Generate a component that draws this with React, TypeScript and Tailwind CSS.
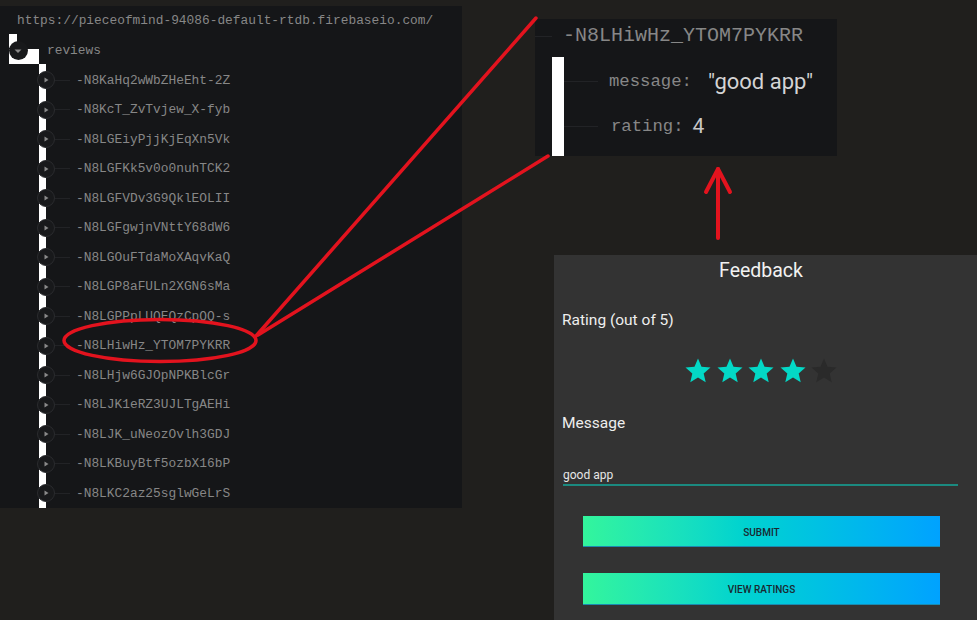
import React from "react";

const rows = [
  "-N8KaHq2wWbZHeEht-2Z",
  "-N8KcT_ZvTvjew_X-fyb",
  "-N8LGEiyPjjKjEqXn5Vk",
  "-N8LGFKk5v0o0nuhTCK2",
  "-N8LGFVDv3G9QklEOLII",
  "-N8LGFgwjnVNttY68dW6",
  "-N8LGOuFTdaMoXAqvKaQ",
  "-N8LGP8aFULn2XGN6sMa",
  "-N8LGPPpLUQEQzCpQQ-s",
  "-N8LHiwHz_YTOM7PYKRR",
  "-N8LHjw6GJOpNPKBlcGr",
  "-N8LJK1eRZ3UJLTgAEHi",
  "-N8LJK_uNeozOvlh3GDJ",
  "-N8LKBuyBtf5ozbX16bP",
  "-N8LKC2az25sglwGeLrS",
];

function Star({ filled }: { filled: boolean }) {
  return (
    <svg width="30" height="30" viewBox="0 0 24 24">
      <path
        d="M12 17.27L18.18 21l-1.64-7.03L22 9.24l-7.19-.61L12 2 9.19 8.63 2 9.24l5.46 4.73L5.82 21z"
        fill={filled ? "#03d8c6" : "#2a2a2a"}
      />
    </svg>
  );
}

export default function App() {
  return (
    <div className="relative w-[977px] h-[620px] overflow-hidden bg-[#201f1d]">
      {/* Left database tree panel */}
      <div className="absolute left-0 top-[6px] w-[462px] h-[502px] bg-[#151618]">
        <div className="absolute left-[39px] top-[58px] w-[7px] bottom-0 bg-white" />
        <div className="absolute left-[9px] top-[43px] w-[30px] h-[15px] bg-white" />
        <div className="absolute left-[9px] top-[28px] w-[8px] h-[14px] bg-white" />
        <div className="relative flex flex-col font-['Liberation_Mono',monospace] text-[12.85px] text-[#878787]">
          <div className="h-[30px] flex items-center pl-[17px] pb-[1px]">
            https://pieceofmind-94086-default-rtdb.firebaseio.com/
          </div>
          <div className="h-[29.5px] flex items-center">
            <div className="ml-[8.5px] w-[19px] h-[19px] rounded-full bg-[#18191b] flex items-center justify-center">
              <svg width="10" height="10" viewBox="0 0 10 10">
                <polygon points="1.5,3.5 8.5,3.5 5,7" fill="#8a8a8a" />
              </svg>
            </div>
            <span className="ml-[19.5px]">reviews</span>
          </div>
          {rows.map((r) => (
            <div key={r} className="h-[29.5px] flex items-center">
              <div className="ml-[37px] w-[18px] h-[18px] rounded-full bg-[#18191b] border border-[#2a2b2e] flex items-center justify-center">
                <svg width="10" height="10" viewBox="0 0 10 10">
                  <polygon points="3.5,2.5 7.5,5 3.5,7.5" fill="#8a8a8a" />
                </svg>
              </div>
              <div className="w-[15px] h-px bg-[#222326]" />
              <span className="ml-[6px]">{r}</span>
            </div>
          ))}
        </div>
      </div>

      {/* Zoomed node panel */}
      <div className="absolute left-[535px] top-[19px] w-[302px] h-[137px] bg-[#151618] flex flex-col">
        <div className="h-[34px] flex items-center">
          <div className="w-[17px] h-px bg-[#222326]" />
          <span className="ml-[11px] font-['Liberation_Mono',monospace] text-[20px] text-[#878787]">
            -N8LHiwHz_YTOM7PYKRR
          </span>
        </div>
        <div className="flex mt-[4px] flex-1">
          <div className="ml-[17px] w-[12px] bg-white" />
          <div className="flex flex-col mt-[2px]">
            <div className="h-[45px] flex items-center">
              <div className="w-[34px] h-px bg-[#222326]" />
              <span className="ml-[11px] font-['Liberation_Mono',monospace] text-[17.3px] text-[#878787]">
                message:
              </span>
              <span className="ml-[16px] font-['Roboto',sans-serif] text-[22px] text-[#d4d4d4]">
                "good app"
              </span>
            </div>
            <div className="h-[45px] flex items-center">
              <div className="w-[34px] h-px bg-[#222326]" />
              <span className="ml-[13px] font-['Liberation_Mono',monospace] text-[17.3px] text-[#878787]">
                rating:
              </span>
              <span className="ml-[9px] font-['Roboto',sans-serif] text-[21px] text-[#c8c8c8]">
                4
              </span>
            </div>
          </div>
        </div>
      </div>

      {/* Feedback screen */}
      <div className="absolute left-[554px] top-[255px] w-[423px] h-[365px] bg-[#333333] font-['Roboto',sans-serif]">
        <div className="w-[414px] flex flex-col">
          <div className="h-[31px] pt-[1px] flex items-center justify-center text-[19.5px] text-[#f2f2f2]">
            Feedback
          </div>
          <div className="mt-[24px] h-[22px] flex items-center pl-[8px] text-[15.5px] text-[#eeeeee]">
            Rating (out of 5)
          </div>
          <div className="mt-[24px] flex justify-center gap-[1.5px]">
            <Star filled />
            <Star filled />
            <Star filled />
            <Star filled />
            <Star filled={false} />
          </div>
          <div className="mt-[27px] h-[22px] flex items-center pl-[8px] text-[15.5px] text-[#eeeeee]">
            Message
          </div>
          <div className="mt-[31px] ml-[9px] w-[395px] h-[20px] flex items-center text-[12px] text-[#e6e6e6] border-b-2 border-[#1b8a80]">
            good app
          </div>
          <div className="mt-[30px] ml-[29px] w-[357px] h-[31px] pt-[2px] flex items-center justify-center bg-linear-to-r from-[#33f59c] to-[#00a2ff] border-b border-[#1a8ab0] text-[10px] font-medium text-[#1a2830]">
            SUBMIT
          </div>
          <div className="mt-[26px] ml-[29px] w-[357px] h-[32px] pt-[1px] flex items-center justify-center bg-linear-to-r from-[#33f59c] to-[#00a2ff] border-b border-[#1a8ab0] text-[10px] font-medium text-[#1a2830]">
            VIEW RATINGS
          </div>
        </div>
      </div>

      {/* Red annotations */}
      <svg
        className="absolute inset-0 pointer-events-none"
        width="977"
        height="620"
        viewBox="0 0 977 620"
      >
        <g stroke="#e3131e" strokeWidth="3.5" fill="none" strokeLinecap="round" strokeLinejoin="round">
          <ellipse cx="160" cy="340.5" rx="96" ry="21" />
          <line x1="256" y1="336" x2="536" y2="18" />
          <line x1="258" y1="335" x2="548" y2="156" />
          <line x1="718" y1="238" x2="718" y2="169" strokeWidth="4" />
          <polyline points="706,192 718,169 730,192" strokeWidth="4" />
        </g>
      </svg>
    </div>
  );
}
